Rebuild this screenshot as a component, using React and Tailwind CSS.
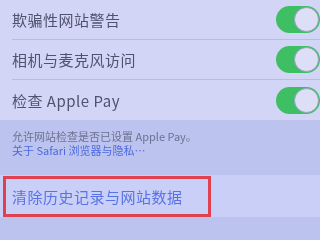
import React from 'react';

const rows = ['欺骗性网站警告', '相机与麦克风访问', '检查 Apple Pay'];

const Toggle = () => (
  <div className="relative w-[44px] h-[27px] rounded-full bg-[#3fbf63]">
    <div className="absolute right-[1px] top-[1px] w-[25px] h-[25px] rounded-full bg-[#dcdff6] border border-[#9aa0c4]" />
  </div>
);

const App = () => {
  return (
    <div
      className="relative w-[320px] h-[240px] overflow-hidden bg-[#bcc3ee] blur-[0.6px]"
      style={{ fontFamily: '"Noto Sans CJK SC", "Noto Sans", sans-serif' }}
    >
      <div className="bg-[#d2d5f5]">
        {rows.map((label, i) => (
          <div key={label} className="flex h-[40px] pl-[12px]">
            <div
              className={`flex flex-1 items-center justify-between ${
                i < rows.length - 1 ? 'border-b border-[#b9bde2]' : ''
              }`}
            >
              <span className="text-[15px] leading-none text-[#50536e] tracking-[0.5px]">{label}</span>
              <Toggle />
            </div>
          </div>
        ))}
      </div>

      <div className="px-[12px] pt-[9px] pb-[18px] text-[11px] leading-[14px]">
        <p className="text-[#6d7190]">允许网站检查是否已设置 Apple Pay。</p>
        <p className="text-[#4d6ae0]">关于 Safari 浏览器与隐私…</p>
      </div>

      <div className="flex h-[42px] items-center bg-[#c9cff6] pl-[12px]">
        <span className="text-[15px] leading-none text-[#5873e4] tracking-[0.5px]">清除历史记录与网站数据</span>
      </div>

      <div className="absolute left-[3px] top-[176px] w-[208px] h-[41px] border-[3px] border-[#e0404f]" />
    </div>
  );
};

export default App;
